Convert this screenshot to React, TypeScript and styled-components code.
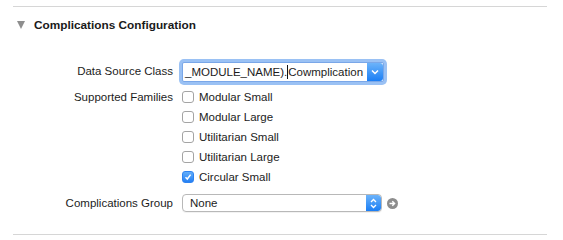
import React from 'react';
import styled, { createGlobalStyle } from 'styled-components';

const GlobalStyle = createGlobalStyle`
  body {
    margin: 0;
    background: #ffffff;
    font-family: 'Liberation Sans', Arial, sans-serif;
    color: #1c1c1c;
  }
`;

const Page = styled.div`
  width: 563px;
  height: 240px;
  padding-top: 6px;
  box-sizing: border-box;
  overflow: hidden;
`;

const Section = styled.section`
  margin-left: 13px;
  width: 534px;
  border-top: 1px solid #d6d6d6;
  border-bottom: 1px solid #d6d6d6;
  padding-bottom: 19px;
`;

const Header = styled.div`
  display: flex;
  align-items: center;
  height: 36px;
  padding-left: 4px;
  gap: 9px;
  margin-bottom: 16px;
`;

const Disclosure = styled.span`
  width: 0;
  height: 0;
  border-left: 4.5px solid transparent;
  border-right: 4.5px solid transparent;
  border-top: 8px solid #8e8e8e;
`;

const Title = styled.h2`
  margin: 0;
  font-size: 11.8px;
  font-weight: bold;
  color: #1a1a1a;
`;

const Form = styled.div`
  display: grid;
  grid-template-columns: 160px 1fr;
  column-gap: 9px;
`;

const Label = styled.div<{ $top?: number; $height?: number }>`
  height: ${({ $height }) => $height ?? 20}px;
  display: flex;
  align-items: center;
  justify-content: flex-end;
  font-size: 11.5px;
  margin-top: ${({ $top }) => $top ?? 0}px;
  white-space: nowrap;
`;

const Cell = styled.div<{ $top?: number }>`
  display: flex;
  align-items: center;
  margin-top: ${({ $top }) => $top ?? 0}px;
`;

const Combo = styled.div`
  width: 200px;
  height: 18px;
  border: 1px solid #7aa7e8;
  border-radius: 2px;
  box-shadow: 0 0 0 3px rgba(120, 172, 240, 0.75);
  background: #fff;
  display: flex;
  align-items: center;
  margin: 3px 0;
`;

const ComboText = styled.span`
  flex: 1;
  padding-left: 2px;
  font-size: 11.5px;
  white-space: nowrap;
  overflow: hidden;
`;

const Caret = styled.span`
  display: inline-block;
  width: 1px;
  height: 14px;
  background: #111;
  vertical-align: -3px;
`;

const BlueButton = styled.span<{ $width: number }>`
  width: ${({ $width }) => $width}px;
  align-self: stretch;
  display: flex;
  align-items: center;
  justify-content: center;
  background: linear-gradient(#6cb3fa, #1a7ef5);
  border-radius: 0 3px 3px 0;
`;

const Checks = styled.div`
  display: flex;
  flex-direction: column;
`;

const CheckRow = styled.label`
  display: flex;
  align-items: center;
  height: 20px;
  gap: 5px;
  font-size: 11.5px;
`;

const Box = styled.span<{ $checked?: boolean }>`
  width: 12px;
  height: 12px;
  box-sizing: border-box;
  border-radius: 3px;
  border: 1px solid ${({ $checked }) => ($checked ? '#2f83f0' : '#a4a4a4')};
  background: ${({ $checked }) =>
    $checked ? 'linear-gradient(#63aefa, #2580f4)' : '#ffffff'};
  display: flex;
  align-items: center;
  justify-content: center;
`;

const Popup = styled.div`
  width: 200px;
  height: 18px;
  box-sizing: border-box;
  border: 1px solid #b8b8b8;
  border-radius: 4px;
  display: flex;
  align-items: center;
  overflow: hidden;
  box-shadow: 0 1px 0 rgba(0, 0, 0, 0.05);
`;

const PopupText = styled.span`
  flex: 1;
  padding-left: 7px;
  font-size: 11.5px;
`;

const GoButton = styled.span`
  margin-left: 5px;
  width: 11px;
  height: 11px;
  border-radius: 50%;
  background: #8d8d8d;
  display: flex;
  align-items: center;
  justify-content: center;
`;

const families = [
  { name: 'Modular Small', checked: false },
  { name: 'Modular Large', checked: false },
  { name: 'Utilitarian Small', checked: false },
  { name: 'Utilitarian Large', checked: false },
  { name: 'Circular Small', checked: true },
];

export default function App() {
  return (
    <>
      <GlobalStyle />
      <Page>
        <Section>
          <Header>
            <Disclosure />
            <Title>Complications Configuration</Title>
          </Header>
          <Form>
            <Label $height={24}>Data Source Class</Label>
            <Cell>
              <Combo>
                <ComboText>
                  _MODULE_NAME).<Caret />Cowmplication
                </ComboText>
                <BlueButton $width={16}>
                  <svg width="8" height="6" viewBox="0 0 8 6">
                    <path d="M1 1.5 L4 4.5 L7 1.5" stroke="#fff" strokeWidth="1.5" fill="none" />
                  </svg>
                </BlueButton>
              </Combo>
            </Cell>

            <Label $top={2}>Supported Families</Label>
            <Cell $top={2}>
              <Checks>
                {families.map((f) => (
                  <CheckRow key={f.name}>
                    <Box $checked={f.checked}>
                      {f.checked && (
                        <svg width="8" height="8" viewBox="0 0 8 8">
                          <path d="M1.5 4.2 L3.3 6 L6.6 1.6" stroke="#fff" strokeWidth="1.5" fill="none" />
                        </svg>
                      )}
                    </Box>
                    {f.name}
                  </CheckRow>
                ))}
              </Checks>
            </Cell>

            <Label $top={4} $height={24}>Complications Group</Label>
            <Cell $top={4}>
              <Popup>
                <PopupText>None</PopupText>
                <BlueButton $width={15}>
                  <svg width="7" height="11" viewBox="0 0 7 11">
                    <path d="M1 4 L3.5 1.5 L6 4 M1 7 L3.5 9.5 L6 7" stroke="#fff" strokeWidth="1.3" fill="none" />
                  </svg>
                </BlueButton>
              </Popup>
              <GoButton>
                <svg width="7" height="7" viewBox="0 0 7 7">
                  <path d="M0.5 3.5 H5.5 M3.3 1.2 L5.6 3.5 L3.3 5.8" stroke="#fff" strokeWidth="1.4" fill="none" />
                </svg>
              </GoButton>
            </Cell>
          </Form>
        </Section>
      </Page>
    </>
  );
}
